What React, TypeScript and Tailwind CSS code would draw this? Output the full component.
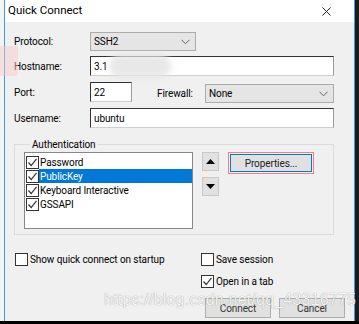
import React from "react";

const Check = ({ checked }: { checked?: boolean }) => (
    <span className="w-[13px] h-[13px] shrink-0 border border-[#333] bg-white flex items-center justify-center">
        {checked ? (
            <svg width="11" height="11" viewBox="0 0 11 11">
                <polyline points="1.5,5.5 4.2,8.5 9.5,1.8" fill="none" stroke="#333" strokeWidth="1.2" />
            </svg>
        ) : null}
    </span>
);

const Chevron = () => (
    <svg width="9" height="6" viewBox="0 0 9 6" className="ml-auto mr-[5px]">
        <polyline points="0.5,0.8 4.5,4.8 8.5,0.8" fill="none" stroke="#606060" strokeWidth="1" />
    </svg>
);

const Select = ({ value, className }: { value: string; className: string }) => (
    <div className={"h-[19px] bg-[#e5e5e5] border border-[#acacac] flex items-center pl-[3px] " + className}>
        <span>{value}</span>
        <Chevron />
    </div>
);

const Input = ({ value, className, children }: { value: string; className: string; children?: React.ReactNode }) => (
    <div className={"h-[20px] bg-white border border-t-[#333] border-l-[#333] border-r-[#9a9a9a] border-b-[#cfcfcf] flex items-center pl-[3px] relative " + className}>
        <span>{value}</span>
        {children}
    </div>
);

const authItems = [
    { name: "Password", selected: false },
    { name: "PublicKey", selected: true },
    { name: "Keyboard Interactive", selected: false },
    { name: "GSSAPI", selected: false },
];

export default function App() {
    return (
        <div className="w-[359px] h-[324px] flex flex-col overflow-hidden bg-black font-['Roboto',sans-serif] text-[10px] tracking-[-0.1px] text-black relative">
            <div className="flex flex-1 min-h-0">
                <div className="w-[4px] bg-[#f4f4f4]" />
                <div className="w-[351px] flex flex-col border-l border-r border-[#3d9be9] bg-[#f0f0f0]">
                    {/* title bar */}
                    <div className="h-[22px] bg-white flex items-center pl-[3px] pr-[23px]">
                        <span className="text-[11.5px] tracking-normal leading-none">Quick Connect</span>
                        <svg width="9" height="9" viewBox="0 0 9 9" className="ml-auto">
                            <line x1="0.5" y1="0.5" x2="8.5" y2="8.5" stroke="#222" strokeWidth="1" />
                            <line x1="8.5" y1="0.5" x2="0.5" y2="8.5" stroke="#222" strokeWidth="1" />
                        </svg>
                    </div>

                    <div className="flex flex-col pl-[9px] pt-[10px]">
                        <div className="flex items-center">
                            <span className="w-[76px]">Protocol:</span>
                            <Select value="SSH2" className="w-[106px]" />
                        </div>
                        <div className="flex items-center mt-[5px]">
                            <span className="w-[76px]">Hostname:</span>
                            <Input value="3.1" className="w-[244px]">
                                <div className="absolute left-[18px] top-[-3px] w-[62px] h-[24px] rounded-full bg-[#e6e6e6] blur-[3px] opacity-90" />
                            </Input>
                        </div>
                        <div className="flex items-center mt-[5px]">
                            <span className="w-[76px]">Port:</span>
                            <Input value="22" className="w-[42px]" />
                            <span className="ml-[25px] w-[48px] mt-[3px]">Firewall:</span>
                            <Select value="None" className="w-[129px] mt-[3px]" />
                        </div>
                        <div className="flex items-center mt-[5px]">
                            <span className="w-[76px]">Username:</span>
                            <Input value="ubuntu" className="w-[244px]" />
                        </div>

                        <fieldset className="mt-[9px] w-[320px] border border-[#dcdcdc] pl-[9px] pb-[5px] flex">
                            <legend className="ml-[6px] px-[2px] leading-[15px]">Authentication</legend>
                            <div className="flex items-start">
                                <div className="w-[169px] h-[77px] bg-white border border-[#828790] pt-[2px] flex flex-col">
                                    {authItems.map(item => (
                                        <div key={item.name} className="h-[14px] flex items-center pl-[1px]">
                                            <Check checked />
                                            <span className={"flex-1 h-full flex items-center pl-[1px] " + (item.selected ? "bg-[#0078d7] text-white" : "")}>
                                                {item.name}
                                            </span>
                                        </div>
                                    ))}
                                </div>
                                <div className="flex flex-col gap-[6px] ml-[9px]">
                                    <div className="w-[17px] h-[19px] bg-[#e1e1e1] border border-[#c8c8c8] flex items-center justify-center">
                                        <svg width="9" height="5" viewBox="0 0 9 5"><polygon points="0,5 4.5,0 9,5" fill="#000" /></svg>
                                    </div>
                                    <div className="w-[17px] h-[19px] bg-[#e1e1e1] border border-[#c8c8c8] flex items-center justify-center">
                                        <svg width="9" height="5" viewBox="0 0 9 5"><polygon points="0,0 4.5,5 9,0" fill="#000" /></svg>
                                    </div>
                                </div>
                                <div className="ml-[9px] border border-[#f08080] p-[1px]">
                                    <div className="w-[82px] h-[18px] bg-[#e1e1e1] border border-[#0078d7] flex items-center justify-center text-[#222]">
                                        Properties...
                                    </div>
                                </div>
                            </div>
                        </fieldset>

                        <div className="flex items-center mt-[17px] pl-[1px]">
                            <div className="flex items-center w-[186px]">
                                <Check />
                                <span className="ml-[2px]">Show quick connect on startup</span>
                            </div>
                            <Check />
                            <span className="ml-[2px]">Save session</span>
                        </div>
                        <div className="flex items-center mt-[7px] pl-[187px]">
                            <Check checked />
                            <span className="ml-[2px]">Open in a tab</span>
                        </div>
                        <div className="flex mt-[9px] pl-[191px] gap-[8px]">
                            <div className="w-[66px] h-[20px] bg-[#e1e1e1] border border-[#adadad] flex items-center justify-center text-[#333]">Connect</div>
                            <div className="w-[66px] h-[20px] bg-[#e1e1e1] border border-[#adadad] flex items-center justify-center text-[#333]">Cancel</div>
                        </div>
                    </div>
                </div>
                <div className="w-[4px] bg-[#1c1c1c]" />
            </div>
            <div className="h-[3px] bg-black" />

            {/* floating overlays */}
            <div className="absolute left-[-4px] top-[46px] w-[22px] h-[30px] rounded-[3px] bg-[#f6c9c9] opacity-50" />
            <div className="absolute left-[104px] top-[292px] text-[16px] leading-none tracking-[0.2px] font-['Liberation_Sans',sans-serif] text-white/90 [text-shadow:0_0_1px_rgba(0,0,0,0.45)]">
                https://blog.csdn.net/qq_43316775
            </div>
        </div>
    );
}
